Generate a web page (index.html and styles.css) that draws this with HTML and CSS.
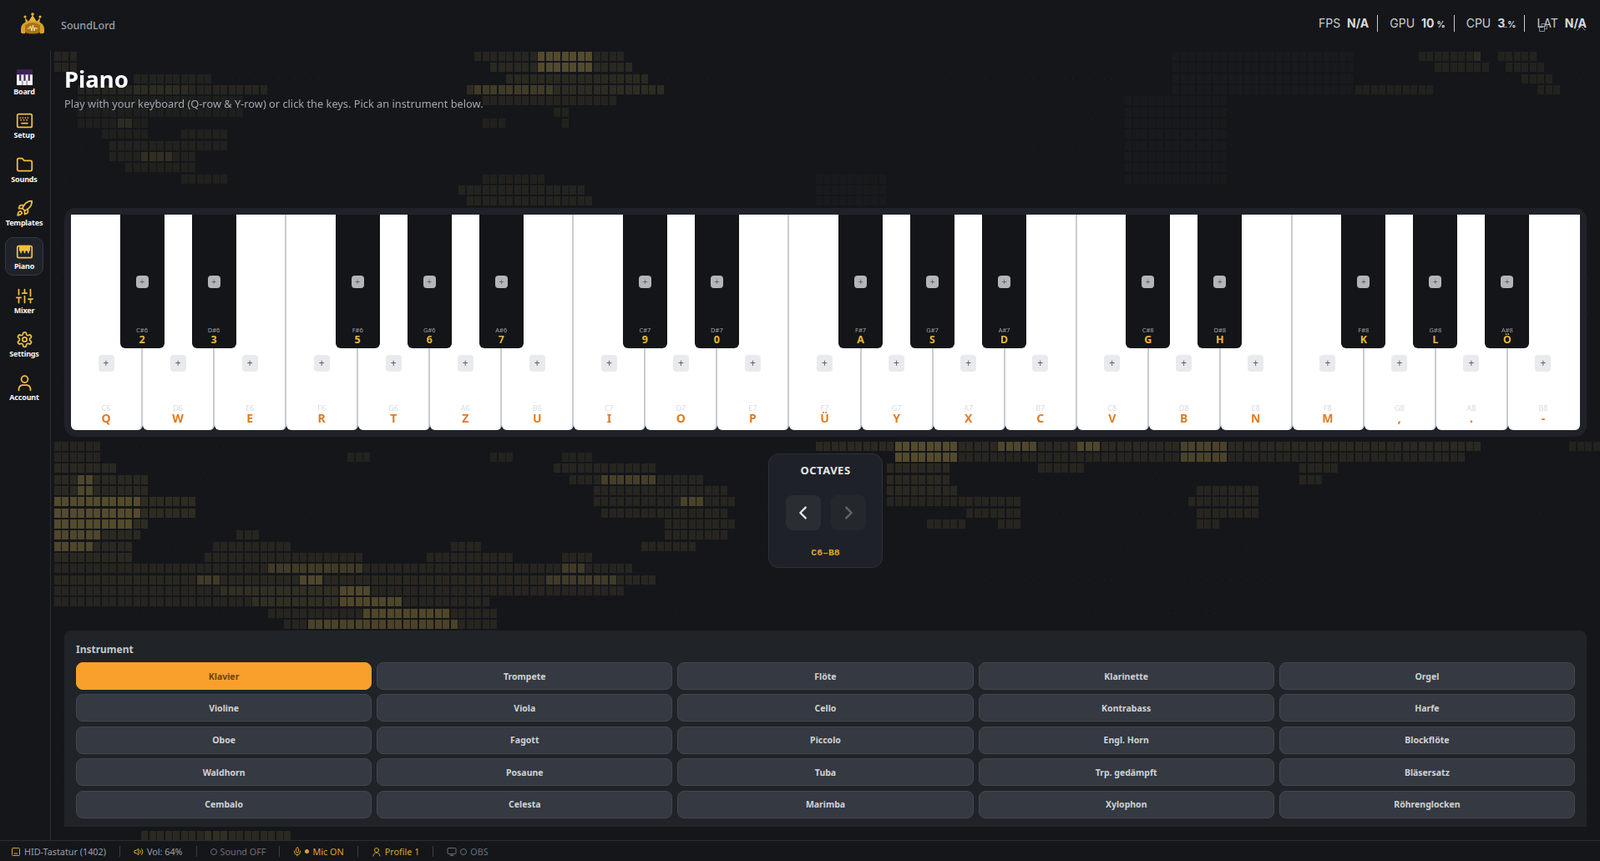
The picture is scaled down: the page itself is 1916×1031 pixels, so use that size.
FILE: index.html
```html
<!DOCTYPE html>
<html lang="en">
<head>
  <meta charset="UTF-8">
  <title>SoundLord - Piano</title>
  <link rel="stylesheet" href="styles.css">
</head>
<body>
  <header class="topbar">
    <div class="brand">
      <svg class="logo" viewBox="0 0 30 26">
        <g fill="#e8b534">
          <circle cx="15" cy="2" r="1.8"/><circle cx="6" cy="5" r="1.6"/><circle cx="24" cy="5" r="1.6"/>
          <path d="M6 6 L10 11 L15 3 L20 11 L24 6 L23 15 H7 Z"/>
          <path d="M1 20 C1 13 7 10 15 10 C23 10 29 13 29 20 L29 24 Q27 26 24 25 L24 17 C22 14 19 13 15 13 C11 13 8 14 6 17 L6 25 Q3 26 1 24 Z" fill="#d9a02a"/>
          <path d="M6 15 Q15 9 24 15 L24 24 Q15 27 6 24 Z" fill="#a8741a"/>
        </g>
        <path d="M9 19 H11.5 L12.5 16 L14 22 L15.5 15 L17 22 L18 18 L19 19 H21" fill="none" stroke="#ffe9a8" stroke-width="1"/>
      </svg>
      <span class="brand-name">SoundLord</span>
    </div>
    <div class="stats">
      <span class="stat">FPS <b>N/A</b></span>
      <span class="stat">GPU <b>10<small>%</small></b></span>
      <span class="stat">CPU <b>3<small>%</small></b></span>
      <span class="stat stat-last">LAT <b>N/A</b></span>
      <i class="win-min"></i>
      <svg class="win-max" viewBox="0 0 10 10"><path d="M.5 3.5h6v6h-6zM3 3.5V.5h6.5v6h-3" fill="none" stroke="#8a8d92"/></svg>
      <svg class="win-up" viewBox="0 0 11 6"><path d="M.5 5.5 5.5.5l5 5" fill="none" stroke="#8a8d92"/></svg>
    </div>
  </header>

  <div class="shell">
    <nav class="sidebar">
      <a class="nav-item">
        <svg class="nav-icon board-icon" viewBox="0 0 18 18">
          <rect width="18" height="18" fill="#f3f1f5"/>
          <rect width="18" height="6" fill="#3a2157"/>
          <path d="M3 6v7h2V6zM8 6v7h2V6zM13 6v7h2V6z" fill="#3a2157"/>
          <path d="M6.5 13v5M11.5 13v5" stroke="#77707f" stroke-width="1"/>
        </svg>
        <span>Board</span>
      </a>
      <a class="nav-item">
        <svg class="nav-icon" viewBox="0 0 24 24"><rect x="2" y="3" width="20" height="18" rx="2"/><path d="M6 8h.01M9.5 8h.01M13 8h.01M16.5 8h.01M7 11h.01M11 11h.01M15 11h.01M8 15.5h8"/></svg>
        <span>Setup</span>
      </a>
      <a class="nav-item">
        <svg class="nav-icon" viewBox="0 0 24 24"><path d="M20 20a2 2 0 0 0 2-2V8a2 2 0 0 0-2-2h-7.9a2 2 0 0 1-1.69-.9L9.6 3.9A2 2 0 0 0 7.93 3H4a2 2 0 0 0-2 2v13a2 2 0 0 0 2 2Z"/></svg>
        <span>Sounds</span>
      </a>
      <a class="nav-item">
        <svg class="nav-icon" viewBox="0 0 24 24"><path d="M4.5 16.5c-1.5 1.26-2 5-2 5s3.74-.5 5-2c.71-.84.7-2.13-.09-2.91a2.18 2.18 0 0 0-2.91-.09z"/><path d="m12 15-3-3a22 22 0 0 1 2-3.95A12.88 12.88 0 0 1 22 2c0 2.72-.78 7.5-6 11a22.35 22.35 0 0 1-4 2z"/><path d="M9 12H4s.55-3.03 2-4c1.62-1.08 5 0 5 0"/><path d="M12 15v5s3.03-.55 4-2c1.08-1.62 0-5 0-5"/></svg>
        <span>Templates</span>
      </a>
      <a class="nav-item active">
        <svg class="nav-icon" viewBox="0 0 24 24"><rect x="2" y="4" width="20" height="16" rx="2"/><path d="M7 4v9M12 4v9M17 4v9M5.5 4h3v6h-3zM10.5 4h3v6h-3zM15.5 4h3v6h-3z"/></svg>
        <span>Piano</span>
      </a>
      <a class="nav-item">
        <svg class="nav-icon" viewBox="0 0 24 24"><path d="M4 21v-7M4 10V3M12 21v-9M12 8V3M20 21v-5M20 12V3M1 14h6M9 8h6M17 16h6"/></svg>
        <span>Mixer</span>
      </a>
      <a class="nav-item">
        <svg class="nav-icon" viewBox="0 0 24 24"><path d="M12.22 2h-.44a2 2 0 0 0-2 2v.18a2 2 0 0 1-1 1.73l-.43.25a2 2 0 0 1-2 0l-.15-.08a2 2 0 0 0-2.73.73l-.22.38a2 2 0 0 0 .73 2.73l.15.1a2 2 0 0 1 1 1.72v.51a2 2 0 0 1-1 1.74l-.15.09a2 2 0 0 0-.73 2.73l.22.38a2 2 0 0 0 2.73.73l.15-.08a2 2 0 0 1 2 0l.43.25a2 2 0 0 1 1 1.73V20a2 2 0 0 0 2 2h.44a2 2 0 0 0 2-2v-.18a2 2 0 0 1 1-1.73l.43-.25a2 2 0 0 1 2 0l.15.08a2 2 0 0 0 2.73-.73l.22-.39a2 2 0 0 0-.73-2.73l-.15-.08a2 2 0 0 1-1-1.74v-.5a2 2 0 0 1 1-1.74l.15-.09a2 2 0 0 0 .73-2.73l-.22-.38a2 2 0 0 0-2.73-.73l-.15.08a2 2 0 0 1-2 0l-.43-.25a2 2 0 0 1-1-1.73V4a2 2 0 0 0-2-2z"/><circle cx="12" cy="12" r="3"/></svg>
        <span>Settings</span>
      </a>
      <a class="nav-item">
        <svg class="nav-icon" viewBox="0 0 24 24"><circle cx="12" cy="7" r="4.5"/><path d="M4 22v-2a6 6 0 0 1 6-5h4a6 6 0 0 1 6 5v2"/></svg>
        <span>Account</span>
      </a>
    </nav>

    <main class="main">
      <canvas id="bgMap" class="bg-map"></canvas>

      <div class="page-head">
        <h1>Piano</h1>
        <p>Play with your keyboard (Q-row &amp; Y-row) or click the keys. Pick an instrument below.</p>
      </div>

      <section class="keyboard">
        <div class="wkey"><button class="add">+</button><span class="note">C6</span><span class="kbd">Q</span>
          <div class="bkey"><button class="add">+</button><span class="note">C#6</span><span class="kbd">2</span></div></div>
        <div class="wkey"><button class="add">+</button><span class="note">D6</span><span class="kbd">W</span>
          <div class="bkey"><button class="add">+</button><span class="note">D#6</span><span class="kbd">3</span></div></div>
        <div class="wkey"><button class="add">+</button><span class="note">E6</span><span class="kbd">E</span></div>
        <div class="wkey"><button class="add">+</button><span class="note">F6</span><span class="kbd">R</span>
          <div class="bkey"><button class="add">+</button><span class="note">F#6</span><span class="kbd">5</span></div></div>
        <div class="wkey"><button class="add">+</button><span class="note">G6</span><span class="kbd">T</span>
          <div class="bkey"><button class="add">+</button><span class="note">G#6</span><span class="kbd">6</span></div></div>
        <div class="wkey"><button class="add">+</button><span class="note">A6</span><span class="kbd">Z</span>
          <div class="bkey"><button class="add">+</button><span class="note">A#6</span><span class="kbd">7</span></div></div>
        <div class="wkey"><button class="add">+</button><span class="note">B6</span><span class="kbd">U</span></div>
        <div class="wkey"><button class="add">+</button><span class="note">C7</span><span class="kbd">I</span>
          <div class="bkey"><button class="add">+</button><span class="note">C#7</span><span class="kbd">9</span></div></div>
        <div class="wkey"><button class="add">+</button><span class="note">D7</span><span class="kbd">O</span>
          <div class="bkey"><button class="add">+</button><span class="note">D#7</span><span class="kbd">0</span></div></div>
        <div class="wkey"><button class="add">+</button><span class="note">E7</span><span class="kbd">P</span></div>
        <div class="wkey"><button class="add">+</button><span class="note">F7</span><span class="kbd">Ü</span>
          <div class="bkey"><button class="add">+</button><span class="note">F#7</span><span class="kbd">A</span></div></div>
        <div class="wkey"><button class="add">+</button><span class="note">G7</span><span class="kbd">Y</span>
          <div class="bkey"><button class="add">+</button><span class="note">G#7</span><span class="kbd">S</span></div></div>
        <div class="wkey"><button class="add">+</button><span class="note">A7</span><span class="kbd">X</span>
          <div class="bkey"><button class="add">+</button><span class="note">A#7</span><span class="kbd">D</span></div></div>
        <div class="wkey"><button class="add">+</button><span class="note">B7</span><span class="kbd">C</span></div>
        <div class="wkey"><button class="add">+</button><span class="note">C8</span><span class="kbd">V</span>
          <div class="bkey"><button class="add">+</button><span class="note">C#8</span><span class="kbd">G</span></div></div>
        <div class="wkey"><button class="add">+</button><span class="note">D8</span><span class="kbd">B</span>
          <div class="bkey"><button class="add">+</button><span class="note">D#8</span><span class="kbd">H</span></div></div>
        <div class="wkey"><button class="add">+</button><span class="note">E8</span><span class="kbd">N</span></div>
        <div class="wkey"><button class="add">+</button><span class="note">F8</span><span class="kbd">M</span>
          <div class="bkey"><button class="add">+</button><span class="note">F#8</span><span class="kbd">K</span></div></div>
        <div class="wkey"><button class="add">+</button><span class="note">G8</span><span class="kbd">,</span>
          <div class="bkey"><button class="add">+</button><span class="note">G#8</span><span class="kbd">L</span></div></div>
        <div class="wkey"><button class="add">+</button><span class="note">A8</span><span class="kbd">.</span>
          <div class="bkey"><button class="add">+</button><span class="note">A#8</span><span class="kbd">Ö</span></div></div>
        <div class="wkey"><button class="add">+</button><span class="note">B8</span><span class="kbd">-</span></div>
      </section>

      <section class="octaves">
        <h3>OCTAVES</h3>
        <div class="oct-btns">
          <button class="oct-btn"><svg viewBox="0 0 24 24"><path d="M15 5 8 12l7 7"/></svg></button>
          <button class="oct-btn off"><svg viewBox="0 0 24 24"><path d="m9 5 7 7-7 7"/></svg></button>
        </div>
        <div class="oct-range">C6–B8</div>
      </section>

      <section class="instruments">
        <h4>Instrument</h4>
        <div class="inst-grid">
          <button class="inst active">Klavier</button>
          <button class="inst">Trompete</button>
          <button class="inst">Flöte</button>
          <button class="inst">Klarinette</button>
          <button class="inst">Orgel</button>
          <button class="inst">Violine</button>
          <button class="inst">Viola</button>
          <button class="inst">Cello</button>
          <button class="inst">Kontrabass</button>
          <button class="inst">Harfe</button>
          <button class="inst">Oboe</button>
          <button class="inst">Fagott</button>
          <button class="inst">Piccolo</button>
          <button class="inst">Engl. Horn</button>
          <button class="inst">Blockflöte</button>
          <button class="inst">Waldhorn</button>
          <button class="inst">Posaune</button>
          <button class="inst">Tuba</button>
          <button class="inst">Trp. gedämpft</button>
          <button class="inst">Bläsersatz</button>
          <button class="inst">Cembalo</button>
          <button class="inst">Celesta</button>
          <button class="inst">Marimba</button>
          <button class="inst">Xylophon</button>
          <button class="inst">Röhrenglocken</button>
        </div>
      </section>
    </main>
  </div>

  <footer class="statusbar">
    <span class="st">
      <svg class="st-icon" viewBox="0 0 24 24"><rect x="3" y="3" width="18" height="18" rx="2"/><path d="M8 16h8"/></svg>
      HID-Tastatur (1402)
    </span>
    <span class="st">
      <svg class="st-icon" viewBox="0 0 24 24"><path d="M11 5 6 9H2v6h4l5 4zM15.5 8.5a5 5 0 0 1 0 7M19 5a10 10 0 0 1 0 14"/></svg>
      Vol: 64%
    </span>
    <span class="st dim"><i class="ring"></i>Sound OFF</span>
    <span class="st gold">
      <svg class="st-icon mic" viewBox="0 0 24 24"><rect x="9" y="2" width="6" height="12" rx="3"/><path d="M5 10v2a7 7 0 0 0 14 0v-2M12 19v3"/></svg>
      <i class="dot"></i>Mic ON
    </span>
    <span class="st gold">
      <svg class="st-icon" viewBox="0 0 24 24"><circle cx="12" cy="8" r="5"/><path d="M4 22a8 8 0 0 1 16 0"/></svg>
      Profile 1
    </span>
    <span class="st dim">
      <svg class="st-icon" viewBox="0 0 24 24"><rect x="2" y="3" width="20" height="14" rx="2"/><path d="M12 17v4M8 21h8"/></svg>
      <i class="ring"></i>OBS
    </span>
  </footer>

  <script src="map.js"></script>
</body>
</html>
```
FILE: styles.css
```css
* {
  box-sizing: border-box;
}
html, body {
  height: 100%;
}
body {
  margin: 0;
  display: flex;
  flex-direction: column;
  overflow: hidden;
  background-color: #14161a;
  color: #e5e7ea;
  font-family: "Noto Sans", "Open Sans", sans-serif;
}
button {
  font-family: inherit;
  cursor: pointer;
}

/* top bar */
.topbar {
  flex: 0 0 61px;
  display: flex;
  justify-content: space-between;
  align-items: center;
  padding: 0 16px 0 24px;
}
.brand {
  display: flex;
  align-items: center;
  gap: 19px;
}
.logo {
  width: 30px;
  height: 26px;
  margin-top: -6px;
}
.brand-name {
  font-size: 12.5px;
  font-weight: 500;
  color: #9aa0a8;
}
.stats {
  position: relative;
  display: flex;
  align-items: center;
  margin-top: -6px;
  font-family: Inter, sans-serif;
  font-size: 14px;
  color: #c9ccd0;
}
.stat {
  height: 20px;
  line-height: 20px;
  padding: 0 10px 0 14px;
  border-right: 1px solid #c9ccd0;
  white-space: nowrap;
}
.stat b {
  margin-left: 4px;
  font-weight: 700;
  color: #d8dadd;
}
.stat small {
  margin-left: 3px;
  font-size: 10px;
}
.stat-last {
  border-right: none;
  padding-right: 0;
}
.win-min {
  position: absolute;
  right: 95px;
  top: 14px;
  width: 7px;
  height: 1px;
  background-color: #8a8d92;
}
.win-max {
  position: absolute;
  right: 47px;
  top: 10px;
  width: 10px;
  height: 10px;
}
.win-up {
  position: absolute;
  right: 1px;
  top: 13px;
  width: 11px;
  height: 6px;
}

/* layout */
.shell {
  flex: 1;
  display: flex;
  min-height: 0;
}
.sidebar {
  flex: 0 0 61px;
  width: 61px;
  min-width: 0;
  display: flex;
  flex-direction: column;
  gap: 6px;
  padding: 14px 8px 0 6px;
  border-right: 1px solid #2b2e34;
}
.nav-item {
  height: 46.3px;
  display: flex;
  flex-direction: column;
  align-items: center;
  justify-content: center;
  gap: 0;
  padding-top: 2px;
  border: 1px solid transparent;
  border-radius: 10px;
  font-size: 9px;
  font-weight: 700;
  letter-spacing: -.2px;
  color: #f5f6f7;
  white-space: nowrap;
}
.nav-item.active {
  background-color: #1f2329;
  border-color: #343942;
}
.nav-icon {
  width: 21px;
  height: 21px;
  fill: none;
  stroke: #f0c040;
  stroke-width: 2;
  stroke-linecap: round;
  stroke-linejoin: round;
}
.board-icon {
  width: 19px;
  height: 19px;
  margin-bottom: 1px;
  stroke: none;
}

.main {
  position: relative;
  flex: 1;
  min-width: 0;
  display: flex;
  flex-direction: column;
  padding: 18px 16px 16px 16px;
}
.bg-map {
  position: absolute;
  left: 0;
  top: 0;
}
.page-head, .keyboard, .octaves, .instruments {
  position: relative;
}
.page-head {
  height: 170px;
}
.page-head h1 {
  margin: 0;
  font-size: 27.5px;
  line-height: 32px;
  font-weight: 700;
  color: #fff;
}
.page-head p {
  margin: 4px 0 0;
  font-size: 12.8px;
  line-height: 18px;
  color: #a3a8af;
}

/* keys */
.keyboard {
  display: flex;
  height: 274px;
  padding: 8px;
  background-color: #1f2329;
  border-radius: 14px;
}
.wkey {
  position: relative;
  flex: 1;
  display: flex;
  flex-direction: column;
  align-items: center;
  padding: 168px 0 7px;
  background-color: #fff;
  border-right: 2px solid #c9cdd2;
  border-radius: 0 0 6px 6px;
}
.wkey:last-child {
  border-right: 2px solid #fff;
}
.add {
  width: 19px;
  height: 20px;
  padding: 0;
  border: none;
  border-radius: 4px;
  background-color: #e8eaed;
  color: #5b6068;
  font-size: 12px;
  line-height: 20px;
}
.note {
  margin-top: auto;
  font-size: 9px;
  line-height: 11px;
  color: #d5dae0;
}
.kbd {
  font-size: 14px;
  line-height: 14px;
  font-weight: 700;
  color: #e07b20;
}
.bkey {
  position: absolute;
  top: 0;
  right: -27.5px;
  z-index: 2;
  width: 53px;
  height: 160px;
  display: flex;
  flex-direction: column;
  align-items: center;
  padding: 73px 0 3px;
  background-color: #141518;
  border-radius: 0 0 6px 6px;
}
.bkey .add {
  width: 15px;
  height: 15px;
  background-color: #b3b5b9;
  font-size: 10px;
  line-height: 15px;
}
.bkey .note {
  font-size: 7.5px;
  line-height: 9px;
  color: #a0a3a8;
}
.bkey .kbd {
  font-size: 12.5px;
  line-height: 14px;
  color: #e8b93a;
}

/* octave switcher */
.octaves {
  align-self: center;
  width: 137px;
  height: 137px;
  margin-top: 20px;
  padding-top: 9px;
  background-color: #1e2228;
  border: 1px solid #2c3138;
  border-radius: 12px;
  text-align: center;
}
.octaves h3 {
  margin: 0;
  font-size: 13px;
  line-height: 20px;
  font-weight: 700;
  letter-spacing: .5px;
  color: #e5e7ea;
}
.oct-btns {
  display: flex;
  justify-content: center;
  gap: 12px;
  margin-top: 20px;
}
.oct-btn {
  width: 42px;
  height: 42px;
  padding: 10px;
  border: none;
  border-radius: 8px;
  background-color: #2a2e33;
  color: #e5e7ea;
}
.oct-btn.off {
  background-color: #24272c;
  color: #63676c;
}
.oct-btn svg {
  display: block;
  width: 22px;
  height: 22px;
  fill: none;
  stroke: currentColor;
  stroke-width: 2.5;
  stroke-linecap: round;
  stroke-linejoin: round;
}
.oct-range {
  margin-top: 20px;
  font-family: "Liberation Mono", monospace;
  font-size: 11.5px;
  font-weight: 700;
  color: #d9a52e;
}

/* instrument picker */
.instruments {
  margin-top: auto;
  height: 235px;
  padding: 14px 14px 0;
  background-color: #202428;
  border-radius: 8px 8px 0 0;
}
.instruments h4 {
  margin: 0 0 6px;
  font-size: 12px;
  line-height: 18px;
  font-weight: 700;
  color: #c4c8cd;
}
.inst-grid {
  display: grid;
  grid-template-columns: repeat(5, 1fr);
  grid-auto-rows: 33px;
  gap: 5.4px 6px;
}
.inst {
  border: 1px solid #434850;
  border-radius: 8px;
  background-color: #353941;
  color: #cfd2d6;
  font-size: 10.5px;
  font-weight: 700;
}
.inst.active {
  background-color: #f9a02c;
  border-color: #f9a02c;
  color: #6b4410;
}

/* status bar */
.statusbar {
  flex: 0 0 25px;
  display: flex;
  align-items: center;
  padding: 1px 0 0 13px;
  background-color: #14161a;
  border-top: 1px solid #2b2e34;
  font-size: 10.8px;
  color: #9aa0a8;
}
.st {
  display: flex;
  align-items: center;
  gap: 4px;
  padding-right: 16px;
  margin-right: 16px;
  border-right: 1px solid #3a3e44;
  line-height: 13px;
  white-space: nowrap;
}
.st:last-child {
  border-right: none;
}
.st-icon {
  width: 12px;
  height: 12px;
  fill: none;
  stroke: #d9a52e;
  stroke-width: 2;
  stroke-linecap: round;
  stroke-linejoin: round;
}
.st-icon.mic {
  margin-left: -1px;
  margin-right: -1px;
}
.ring {
  width: 8px;
  height: 8px;
  border: 1px solid currentColor;
  border-radius: 50%;
}
.dot {
  width: 5px;
  height: 5px;
  border-radius: 50%;
  background-color: currentColor;
}
.gold {
  color: #d9a52e;
}
.dim {
  color: #6b7078;
}
.dim .st-icon {
  stroke: #6b7078;
}
```
FILE: map.js
```js
// dotted world map behind the page, drawn cell by cell
// each blob: x0, y0, x1, y1, strength (screen coordinates)
const blobs = [
  // top
  [61,61,88,85,.25], [158,87,257,100,.2], [91,113,288,138,.14], [91,100,316,113,.25], [154,100,221,113,.35],
  [91,138,174,153,.15], [136,138,154,153,.35], [118,153,174,167,.15], [215,153,269,180,.18], [126,167,237,193,.2],
  [166,180,202,193,.4], [148,193,231,207,.18], [215,207,269,220,.18],
  [568,62,750,75,.25], [585,75,755,88,.3], [643,62,710,88,.65], [605,88,775,100,.3], [560,100,795,113,.35],
  [568,100,660,113,.45], [575,113,740,125,.22], [665,125,680,140,.2], [672,140,680,152,.2], [578,140,603,152,.18],
  [578,208,650,220,.18], [550,220,700,232,.22], [558,232,710,247,.22],
  [1695,61,1778,73,.2], [1762,61,1778,73,.35], [1790,61,1837,73,.2], [1715,73,1780,86,.2], [1800,73,1845,86,.2],
  [1820,86,1855,99,.2], [1838,99,1865,113,.2], [1618,99,1712,113,.18],
  [1400,62,1620,110,.08], [1350,120,1470,215,.08], [980,205,1060,245,.08],
  // left of the lower half
  [60,525,125,558,.25], [60,555,143,568,.3], [60,568,178,595,.3], [90,568,113,595,.6], [60,595,230,622,.35],
  [60,595,166,622,.65], [60,622,178,635,.35], [60,622,155,635,.65], [60,635,165,648,.3], [60,635,125,648,.6],
  [60,648,155,675,.3], [60,648,115,662,.6],
  [279,635,315,648,.25], [249,648,344,662,.25], [243,662,433,675,.25], [539,648,575,662,.25], [510,662,610,675,.25],
  [675,662,708,675,.25], [60,675,758,688,.25], [320,675,433,688,.45], [675,675,700,688,.45],
  [60,688,784,702,.28], [232,688,267,702,.45], [356,688,391,702,.6], [652,688,740,702,.45],
  [60,702,746,715,.25], [261,702,403,715,.4], [403,702,439,715,.6],
  [60,715,587,728,.25], [303,715,480,728,.4], [403,715,480,728,.6],
  [320,728,592,742,.25], [433,728,540,742,.6], [338,742,592,755,.25], [368,742,545,755,.55],
  [167,990,347,1006,.3], [243,990,269,1006,.4],
  // middle
  [415,542,441,555,.2], [587,542,614,555,.2], [673,542,708,555,.2], [664,555,784,568,.25], [681,568,841,582,.25],
  [723,568,784,582,.5], [711,582,871,595,.25], [711,595,879,608,.25], [817,595,841,608,.55], [720,608,871,622,.25],
  [796,622,879,635,.25], [796,635,871,648,.25], [770,648,832,662,.25],
  // right
  [971,523,1776,542,.3], [1000,523,1700,533,.4], [1066,523,1148,555,.65], [1196,523,1243,542,.6],
  [1290,523,1320,542,.6], [1409,523,1474,553,.55], [1125,542,1758,553,.25],
  [1243,553,1302,568,.25], [1551,553,1604,568,.25], [1551,568,1587,582,.25],
  [1060,555,1137,582,.3], [1060,582,1149,595,.3], [1060,595,1225,608,.25], [1160,608,1225,622,.25],
  [1113,622,1160,635,.25], [1190,622,1225,635,.25],
  [1427,582,1504,595,.25], [1419,595,1510,608,.25], [1427,608,1504,622,.25], [1435,622,1457,635,.25],
  [1877,523,1916,542,.2]
];

const canvas = document.getElementById('bgMap');
const box = canvas.parentElement;
const W = canvas.width = box.clientWidth;
const H = canvas.height = box.clientHeight;
const ctx = canvas.getContext('2d');
const img = ctx.createImageData(W, H);
const originX = 61;
const originY = 61;

function put(x, y, alpha) {
  if (x < 0 || y < 0 || x >= W || y >= H) return;
  const i = (y * W + x) * 4;
  img.data[i] = 200;
  img.data[i + 1] = 170;
  img.data[i + 2] = 80;
  img.data[i + 3] = alpha * 255;
}

function strengthAt(cx, cy) {
  let s = 0;
  blobs.forEach(b => {
    if (cx >= b[0] && cx < b[2] && cy >= b[1] && cy < b[3]) s = Math.max(s, b[4]);
  });
  return s;
}

for (let row = 0; row * 13.33 < H + originY; row++) {
  for (let col = 0; col * 9.5 < W + originX; col++) {
    const left = Math.round(7.5 + col * 9.5);
    const top = Math.round(62 + row * 13.33 - 13.33);
    const s = strengthAt(left + 3, top + 5);
    if (!s) {
      // sparse specks where the map is empty
      if (row % 3 === 0 && (col * 7 + row * 3) % 5 < 3) put(left + 3 - originX, top + 5 - originY, .1);
      continue;
    }
    for (let y = 0; y < 11; y++) {
      for (let x = 0; x < 8; x++) {
        const odd = (x + y) % 2 === 1;
        put(left + x - originX, top + y - originY, s * (odd ? .6 : (s > .4 ? .5 : .25)));
      }
    }
  }
}
ctx.putImageData(img, 0, 0);
```
